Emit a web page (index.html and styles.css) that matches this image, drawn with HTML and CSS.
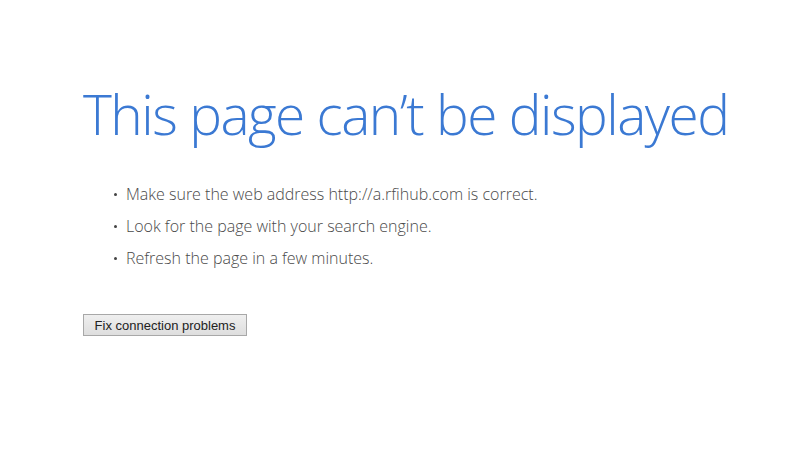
FILE: index.html
```html
<!DOCTYPE html>
<html>
<head>
<meta charset="utf-8">
<link rel="stylesheet" href="styles.css">
</head>
<body>
<main class="page">
  <h1 class="title">This page can’t be displayed</h1>
  <ul class="tips">
    <li>Make sure the web address http://a.rfihub.com is correct.</li>
    <li>Look for the page with your search engine.</li>
    <li>Refresh the page in a few minutes.</li>
  </ul>
  <button class="fix">Fix connection problems</button>
</main>
</body>
</html>
```

FILE: styles.css
```css
html, body {
  margin: 0;
  padding: 0;
  background: #fff;
}
.page {
  display: flex;
  flex-direction: column;
  align-items: flex-start;
  padding: 78px 0 0 83px;
}
.title {
  margin: 0;
  font-family: "Open Sans", sans-serif;
  font-weight: 300;
  font-size: 55px;
  line-height: 72px;
  color: #3b79d3;
  letter-spacing: -1.5px;
}
.tips {
  margin: 28px 0 0 0;
  padding: 0 0 0 43px;
  list-style: none;
  font-family: "Open Sans", sans-serif;
  font-weight: 300;
  font-size: 16px;
  line-height: 32px;
  color: #4a4a4a;
}
.tips li {
  position: relative;
}
.tips li::before {
  content: "";
  position: absolute;
  left: -12px;
  top: 15px;
  width: 3px;
  height: 3px;
  border-radius: 50%;
  background: #444;
}
.fix {
  margin-top: 40px;
  width: 164px;
  height: 22px;
  padding: 0;
  font-family: "Liberation Sans", Arial, sans-serif;
  font-size: 13px;
  color: #222;
  border: 1px solid #a8a8a8;
  border-radius: 0;
  background: linear-gradient(#efefef, #dedede);
}
```
